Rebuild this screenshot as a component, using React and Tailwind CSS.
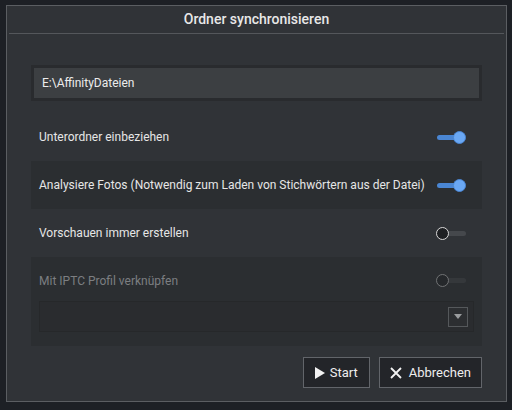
import { useState } from 'react';

function Toggle({ on, disabled }) {
    return (
        <div className={`relative w-[32px] h-[14px] flex items-center ${disabled ? 'opacity-40' : ''}`}>
            <div className={`h-[5px] rounded-full ${on ? 'ml-[2px] w-[24px] bg-[#4a86d3]' : 'ml-[7px] w-[24px] bg-[#45484c]'}`} />
            {on ? (
                <div className="absolute right-[1px] w-[13px] h-[13px] rounded-full bg-[#6aa8f4] border border-[#4a86d3]" />
            ) : (
                <div className="absolute left-[1px] w-[13px] h-[13px] rounded-full bg-[#1e2023] border border-[#d8d8d8]" />
            )}
        </div>
    );
}

function Row({ label, on, shaded }) {
    return (
        <div className={`flex items-center justify-between h-[48px] pl-[8px] pr-[15px] ${shaded ? 'bg-[#2b2e31]' : ''}`}>
            <span className="text-[12px] text-[#e6e6e6]">{label}</span>
            <Toggle on={on} />
        </div>
    );
}

export default function App() {
    const [path] = useState('E:\\AffinityDateien');

    return (
        <div className="w-[512px] h-[410px] bg-[#1d2025] pt-[5px] pl-[6px]" style={{ fontFamily: 'Roboto, "Liberation Sans", sans-serif' }}>
            <div className="w-[501px] h-[397px] bg-[#303337] border border-[#5b5e62] flex flex-col">
                {/* Titel */}
                <div className="h-[28px] mx-[2px] border-b border-[#54575b] flex items-center justify-center">
                    <span className="text-[14px] font-medium text-[#e8e8e8]">Ordner synchronisieren</span>
                </div>

                <div className="px-[24px] pt-[31px] flex flex-col">
                    {/* Pfad */}
                    <div className="h-[36px] border-[3px] border-[#292b2e] bg-[#3c3f42] flex items-center pl-[8px]">
                        <span className="text-[12px] text-[#ececec]">{path}</span>
                    </div>

                    <div className="mt-[12px] flex flex-col">
                        <Row label="Unterordner einbeziehen" on />
                        <Row label="Analysiere Fotos (Notwendig zum Laden von Stichwörtern aus der Datei)" on shaded />
                        <Row label="Vorschauen immer erstellen" on={false} />

                        {/* IPTC Gruppe (deaktiviert) */}
                        <div className="bg-[#2b2e31] px-[8px] pb-[14px]">
                            <div className="flex items-center justify-between h-[47px] pr-[7px]">
                                <span className="text-[12px] text-[#7c7e81]">Mit IPTC Profil verknüpfen</span>
                                <Toggle on={false} disabled />
                            </div>
                            <div className="h-[31px] bg-[#2a2c2f] border border-[#26282a] flex items-center justify-end pr-[5px] -mt-[3px]">
                                <div className="w-[20px] h-[20px] border border-[#55585b] bg-[#2c2e31] flex items-center justify-center">
                                    <svg width="8" height="5" viewBox="0 0 8 5"><path d="M0 0h8L4 5z" fill="#9a9c9e" /></svg>
                                </div>
                            </div>
                        </div>
                    </div>

                    {/* Buttons */}
                    <div className="flex justify-end gap-[9px] mt-[11px]">
                        <button className="h-[31px] px-[11px] flex items-center gap-[5px] bg-[#232529] border border-[#62656a] text-[13px] text-[#eeeeee]">
                            <svg width="10" height="12" viewBox="0 0 10 12"><path d="M0 0L10 6L0 12z" fill="#f2f2f2" /></svg>
                            Start
                        </button>
                        <button className="h-[31px] px-[10px] flex items-center gap-[7px] bg-[#232529] border border-[#62656a] text-[13px] text-[#eeeeee]">
                            <svg width="12" height="12" viewBox="0 0 12 12"><path d="M1 1L11 11M11 1L1 11" stroke="#f2f2f2" strokeWidth="1.8" /></svg>
                            Abbrechen
                        </button>
                    </div>
                </div>
            </div>
        </div>
    );
}
